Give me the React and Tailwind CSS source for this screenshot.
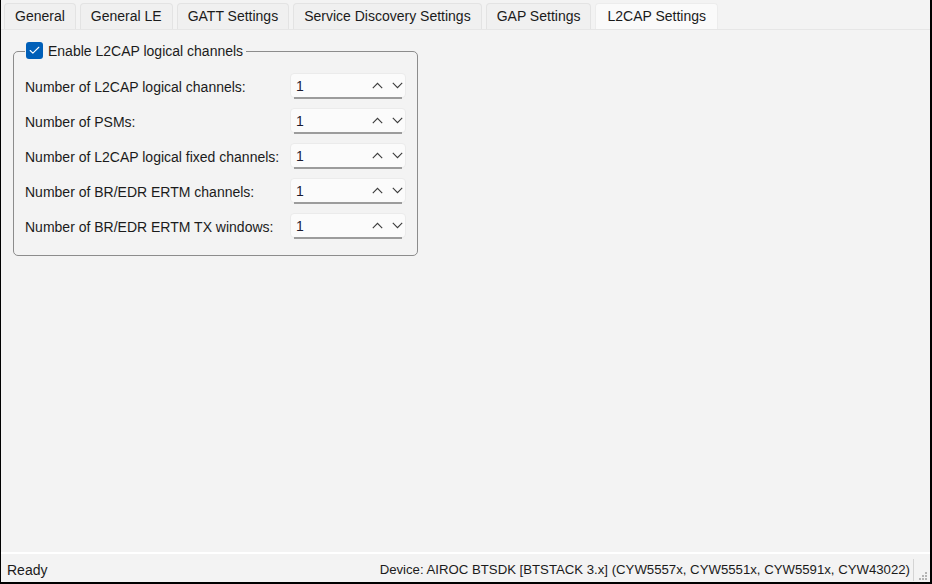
import { Check } from 'lucide-react';

const tabs = ['General', 'General LE', 'GATT Settings', 'Service Discovery Settings', 'GAP Settings', 'L2CAP Settings'];

const rows = [
    'Number of L2CAP logical channels:',
    'Number of PSMs:',
    'Number of L2CAP logical fixed channels:',
    'Number of BR/EDR ERTM channels:',
    'Number of BR/EDR ERTM TX windows:',
];

function Caret({ up }) {
    return (
        <svg width="11" height="7" viewBox="0 0 11 7" className="text-[#3c3c3c]">
            <path
                d={up ? 'M0.8 6.2 L5.5 1.3 L10.2 6.2' : 'M0.8 0.8 L5.5 5.7 L10.2 0.8'}
                fill="none"
                stroke="currentColor"
                strokeWidth="1.1"
            />
        </svg>
    );
}

function SpinBox({ value }) {
    return (
        <div className="flex flex-col w-[116px]">
            <div className="h-[25px] bg-[#fbfbfb] border border-[#ebebeb] rounded-[4px] flex items-center pl-[5px] pr-[2px]">
                <span className="flex-1 text-[#1b1b30] pt-[2px]">{value}</span>
                <div className="flex items-center gap-[9px] pt-[1px]">
                    <Caret up />
                    <Caret />
                </div>
            </div>
            <div className="h-[2px] mx-[4px] -mt-[1px] bg-[#9c9c9c]" />
        </div>
    );
}

export default function App() {
    return (
        <div
            className="w-[932px] h-[584px] bg-[#f3f3f3] border-l border-r-2 border-b-2 border-black flex flex-col text-[14px] text-[#1b1b1b] overflow-hidden"
            style={{ fontFamily: '"Liberation Sans", Arial, sans-serif' }}
        >
            {/* Tab strip */}
            <div className="h-[30px] flex items-end gap-[4px] pl-[3px] border-b border-[#e6e6e6] bg-[#f3f3f3]">
                {tabs.map((t, i) => (
                    <div
                        key={t}
                        className={`h-[26px] px-[10px] flex items-center border border-b-0 rounded-t-[4px] ${i === tabs.length - 1
                                ? 'bg-[#fafafa] border-[#ececec] px-[11px]'
                                : 'bg-[#f0f0f0] border-[#e3e3e3]'
                            }`}
                    >
                        {t}
                    </div>
                ))}
            </div>

            {/* Page body */}
            <div className="flex-1 pl-[12px] pt-[11px]">
                <fieldset className="w-[405px] h-[215px] border border-[#8c8c8c] rounded-[5px] pl-[11px] pr-[11px]">
                    <legend className="flex items-center gap-[5px] pl-[1px] pr-[3px] h-[20px]">
                        <span className="w-[17px] h-[17px] rounded-[3px] bg-[#005fb8] flex items-center justify-center -mt-[2px]">
                            <Check size={13} strokeWidth={2} className="text-white" />
                        </span>
                        <span className="pt-[1px]">Enable L2CAP logical channels</span>
                    </legend>
                    <div className="flex flex-col gap-[10px] pt-[12px]">
                        {rows.map(r => (
                            <div key={r} className="flex items-center justify-between h-[25px]">
                                <span className="pt-[3px]">{r}</span>
                                <SpinBox value="1" />
                            </div>
                        ))}
                    </div>
                </fieldset>
            </div>

            {/* Status bar */}
            <div className="h-[30px] border-t-2 border-white flex items-center pl-[6px] pr-[2px] pt-[4px] text-[13.2px]">
                <span className="flex-1 text-[14px]">Ready</span>
                <span>Device: AIROC BTSDK [BTSTACK 3.x] (CYW5557x, CYW5551x, CYW5591x, CYW43022)</span>
                <div className="w-px h-[22px] bg-[#d4d4d4] ml-[3px]" />
                <svg width="14" height="26" viewBox="0 0 14 26" className="self-end">
                    <rect x="11" y="16" width="2" height="2" fill="#b4b4b4" />
                    <rect x="8" y="19" width="2" height="2" fill="#b4b4b4" />
                    <rect x="11" y="19" width="2" height="2" fill="#b4b4b4" />
                    <rect x="5" y="22" width="2" height="2" fill="#b4b4b4" />
                    <rect x="8" y="22" width="2" height="2" fill="#b4b4b4" />
                    <rect x="11" y="22" width="2" height="2" fill="#b4b4b4" />
                </svg>
            </div>
        </div>
    );
}
